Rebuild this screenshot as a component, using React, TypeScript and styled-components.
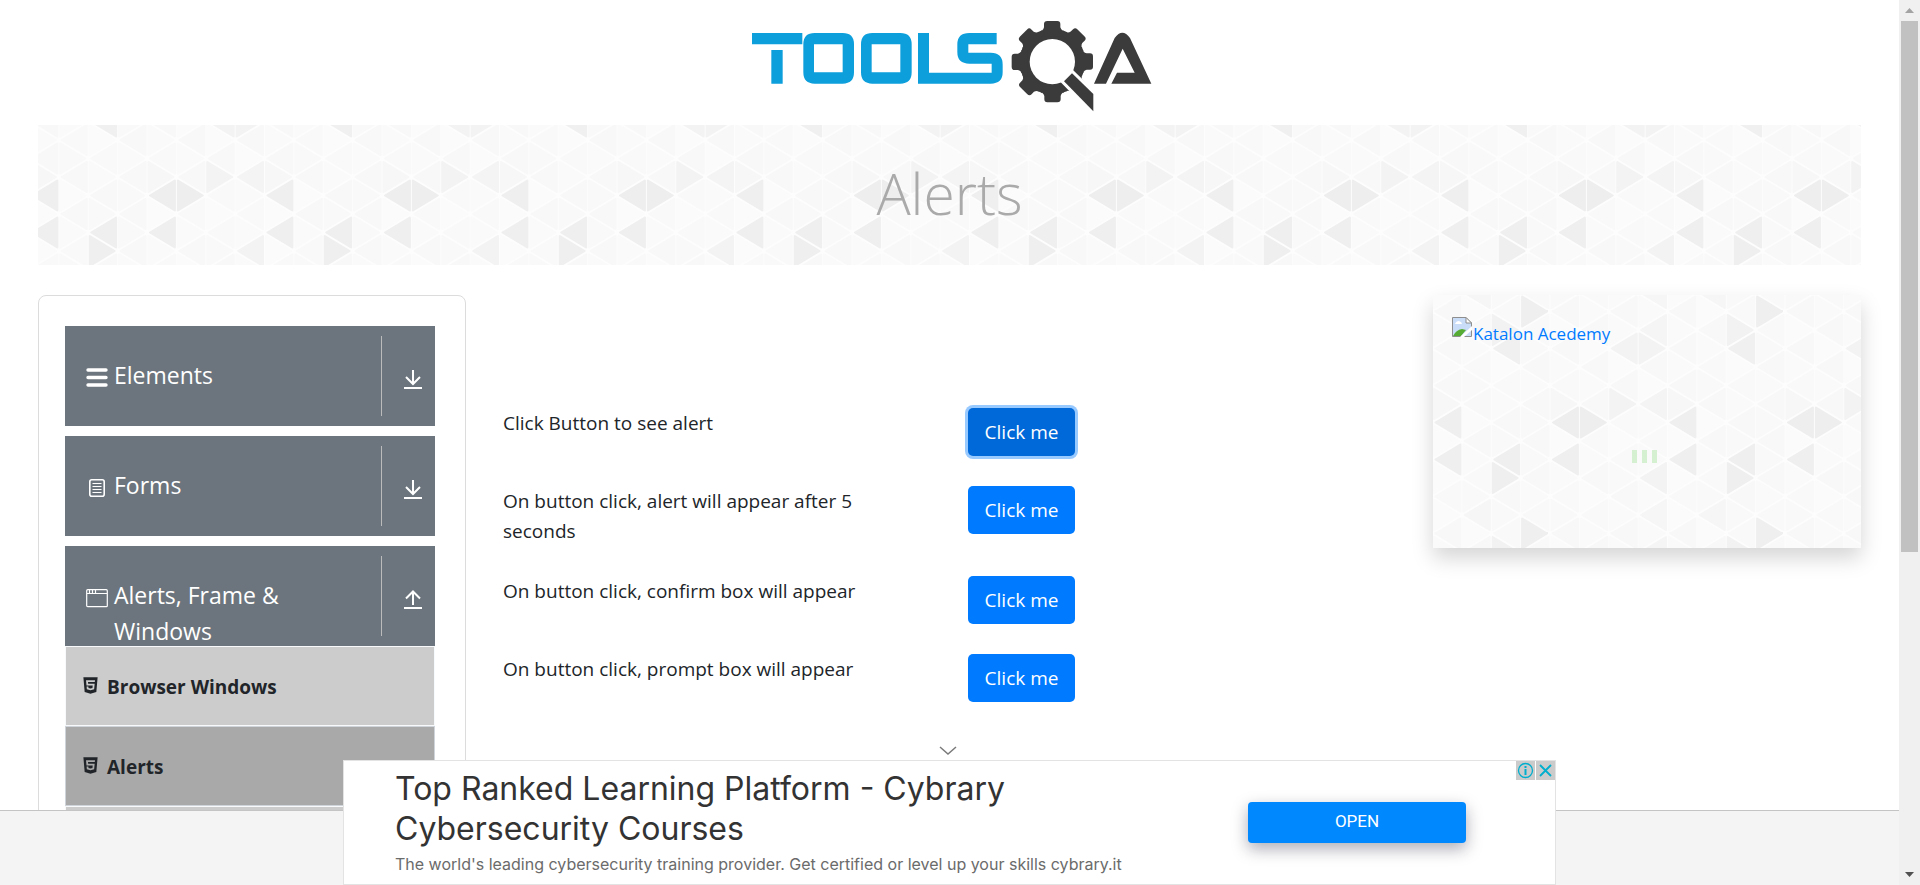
import React from "react";
import styled, { createGlobalStyle } from "styled-components";
import { FaHtml5 } from "react-icons/fa";

/* ---------- triangle texture ---------- */

const TILE_W = 235;
const TILE_H = 222;
const COL = TILE_W / 8;
const HALF = TILE_H / 12;

const accents: Record<string, string> = {
  "0,0": "#eeeeee", "1,0": "#eeeeee", "4,0": "#efefef", "0,2": "#efefef",
  "4,2": "#efefef", "6,2": "#efefef", "6,3": "#efefef", "6,8": "#f0f0f0",
  "7,6": "#efefef", "6,7": "#f2f2f2", "2,8": "#f3f3f3", "3,8": "#f3f3f3",
  "2,11": "#f3f3f3", "3,11": "#f4f4f4", "3,3": "#f3f3f3", "3,7": "#f5f5f5",
  "3,5": "#f6f6f6", "5,5": "#f6f6f6", "4,11": "#f7f7f7", "0,11": "#f7f7f7",
};
const leftTones = ["#f8f8f8", "#f9f9f9", "#f8f8f8"];
const rightTones = ["#fafafa", "#fbfbfb", "#f9f9f9"];

function buildTexture() {
  let shapes = "";
  for (let k = -1; k <= 8; k++) {
    for (let r = -7; r <= 7; r++) {
      const c = (k + 8) % 8;
      const q = (r + 12) % 12;
      const pointsLeft = (c + q) % 2 === 0;
      const tones = pointsLeft ? leftTones : rightTones;
      const tone = accents[`${c},${q}`] ?? tones[(c * 2 + q + ((c * q) % 5)) % 3];
      const x = 20 + k * COL;
      const y = 111.5 + r * HALF;
      const apex = pointsLeft ? x + 3 : x + COL - 3;
      const side = pointsLeft ? x + COL - 1.5 : x + 1.5;
      shapes += `<path d='M${apex} ${y}L${side} ${y - 15}V${y + 15}Z' fill='${tone}' stroke='${tone}' stroke-width='2' stroke-linejoin='round'/>`;
    }
  }
  const svg = `<svg xmlns='http://www.w3.org/2000/svg' width='${TILE_W}' height='${TILE_H}'><rect width='100%' height='100%' fill='#fdfdfd'/>${shapes}</svg>`;
  return `url("data:image/svg+xml,${encodeURIComponent(svg).replace(/'/g, "%27")}")`;
}
const texture = buildTexture();

/* ---------- styles ---------- */

const GlobalStyle = createGlobalStyle`
  * { box-sizing: border-box; }
  body {
    margin: 0;
    background: #fff;
    color: #212529;
    font-family: "Open Sans", "Noto Sans", sans-serif;
    font-size: 19px;
    line-height: 30px;
  }
`;

const Shell = styled.div`
  display: flex;
  height: 100vh;
  overflow: hidden;
`;

const Page = styled.div`
  flex: 1;
  min-width: 0;
  padding: 0 38px;
`;

const Header = styled.header`
  display: flex;
  justify-content: center;
  height: 125px;
  padding-top: 10px;
`;

const Banner = styled.div`
  display: flex;
  align-items: center;
  justify-content: center;
  height: 140px;
  padding-bottom: 4px;
  background: ${texture} center;
`;

const Title = styled.h1`
  margin: 0;
  color: #aaa;
  font-size: 57px;
  font-weight: 300;
  line-height: 72px;
`;

const Columns = styled.div`
  display: grid;
  grid-template-columns: repeat(12, minmax(0, 1fr));
  column-gap: 37px;
  margin-top: 30px;
  align-items: start;
`;

const Sidebar = styled.nav`
  grid-column: span 3;
  padding: 30px 30px 30px 26px;
  border: 1px solid #dcdcdc;
  border-radius: 8px;
`;

const Group = styled.section`
  margin-bottom: 10px;
`;

const GroupHeader = styled.button`
  display: flex;
  align-items: center;
  width: 100%;
  height: 100px;
  padding: 10px 12px 10px 21px;
  border: 0;
  background: #6c757d;
  color: #fff;
  font: inherit;
  font-size: 23px;
  line-height: 36px;
  text-align: left;
`;

const GroupLabel = styled.span`
  display: flex;
  flex: 1;
  gap: 6px;
  height: 80px;
  padding: 21px 60px 0 0;
  border-right: 1px solid #bbb;

  svg { flex: none; margin-top: 10px; }
`;

const GroupArrow = styled.span`
  display: flex;
  justify-content: flex-end;
  width: 41px;
  padding-top: 8px;
`;

const SubList = styled.ul`
  margin: 0;
  padding: 0;
  list-style: none;
`;

const SubItem = styled.li<{ $active?: boolean }>`
  border: 1px solid ${(p) => (p.$active ? "#ced4da" : "#f8f9fa")};
  background: ${(p) => (p.$active ? "#a9a9a9" : "#ccc")};
`;

const SubLink = styled.a`
  display: flex;
  align-items: center;
  gap: 7px;
  height: 78px;
  padding: 2px 0 0 15px;
  color: #212529;
  font-size: 19px;
  font-weight: 700;
  text-decoration: none;

  svg { margin-bottom: 4px; }
`;

const Content = styled.main`
  grid-column: span 6;
  display: flex;
  flex-direction: column;
  gap: 30px;
  padding-top: 113px;
`;

const AlertRow = styled.div`
  display: grid;
  grid-template-columns: repeat(2, minmax(0, 1fr));
  column-gap: 37px;
  align-items: start;
`;

const AlertText = styled.span`
  padding-right: 30px;
`;

const PrimaryButton = styled.button<{ $focused?: boolean }>`
  justify-self: start;
  width: 107px;
  height: 48px;
  padding: 0;
  border: 0;
  border-radius: 5px;
  background: ${(p) => (p.$focused ? "#0069d9" : "#007bff")};
  box-shadow: ${(p) => (p.$focused ? "0 0 0 3px #99caff" : "none")};
  color: #fff;
  font: inherit;
`;

const Promo = styled.aside`
  grid-column: span 3;
  display: flex;
  flex-direction: column;
  height: 253px;
  padding: 20px 19px;
  background: ${texture} center;
  box-shadow: 0 10px 20px rgba(0, 0, 0, 0.17);
`;

const PromoLink = styled.a`
  display: flex;
  gap: 1px;
  color: #007bff;
  font-size: 17px;
  line-height: 38px;
  text-decoration: none;

  svg { margin-top: 2px; }
`;

const Loader = styled.div`
  display: flex;
  justify-content: center;
  gap: 5px;
  margin-top: 97px;
  padding-right: 6px;
`;

const LoaderBar = styled.span`
  width: 5px;
  height: 13px;
  background: #d5efd1;
`;

const Scrollbar = styled.div`
  display: flex;
  flex-direction: column;
  align-items: center;
  width: 21px;
  background: #f0f0f0;
`;

const ScrollArrow = styled.span`
  display: flex;
  align-items: center;
  justify-content: center;
  height: 21px;
`;

const Track = styled.div`
  flex: 1;
  width: 17px;
`;

const Thumb = styled.div`
  height: 63%;
  background: #c1c1c1;
`;

const Dock = styled.footer`
  position: fixed;
  left: 0;
  right: 21px;
  bottom: 0;
  display: flex;
  align-items: flex-end;
  justify-content: center;
  height: 75px;
  border-top: 1px solid #c4c4c4;
  background: #f4f4f4;
`;

const AdStack = styled.div`
  display: flex;
  flex-direction: column;
  width: 100%;
  max-width: 1213px;
`;

const Collapse = styled.button`
  display: flex;
  align-self: center;
  padding: 0;
  margin: 0 4px 5px 0;
  border: 0;
  background: none;
`;

const Ad = styled.section`
  display: flex;
  height: 125px;
  padding-left: 51px;
  border: 1px solid #e3e3e3;
  background: #fff;
  font-family: Inter, sans-serif;
`;

const AdCopy = styled.div`
  width: 853px;
  padding-top: 8px;
`;

const AdTitle = styled.h2`
  max-width: 660px;
  margin: 0;
  color: #333;
  font-size: 32px;
  font-weight: 400;
  line-height: 40px;
`;

const AdSub = styled.p`
  margin: 0;
  color: #6b6b6b;
  font-size: 16px;
  line-height: 30px;
  white-space: nowrap;
`;

const OpenButton = styled.button`
  width: 218px;
  height: 41px;
  margin-top: 41px;
  padding: 0 0 4px;
  border: 0;
  border-radius: 4px;
  background: #0088ff;
  box-shadow: 0 6px 16px rgba(20, 20, 50, 0.35);
  color: #fff;
  font-family: Roboto, sans-serif;
  font-size: 17px;
`;

const AdChoices = styled.div`
  display: flex;
  gap: 1px;
  margin-left: auto;
`;

const AdChoice = styled.button`
  display: flex;
  align-items: center;
  justify-content: center;
  width: 19px;
  height: 19px;
  padding: 0;
  border: 0;
  background: #cbcbcb;
`;

/* ---------- drawings ---------- */

const Logo = () => (
  <svg width="419" height="110" viewBox="0 0 1257 330" role="img" aria-label="ToolsQA">
    <g fill="#0c9fdc">
      <path d="M36 69H187V103H36ZM94 120H128V221H94Z" />
      <path fillRule="evenodd" d="M224 69H308Q342 69 342 103V187Q342 221 308 221H224Q190 221 190 187V103Q190 69 224 69ZM222 103V187H308V103Z" />
      <path fillRule="evenodd" d="M397 69H481Q515 69 515 103V187Q515 221 481 221H397Q363 221 363 187V103Q363 69 397 69ZM395 103V187H481V103Z" />
      <path d="M534 69H567V188H755V161H688Q652 161 652 127V103Q652 69 688 69H770V103H685V128H752Q788 128 788 164V187Q788 221 752 221H534Z" />
    </g>
    <g fill="#3b3b3b">
      <circle cx="937" cy="155" r="96" />
      {[0, 45, 90, 135, 180, 225, 270, 315].map((a) => (
        <path key={a} transform={`rotate(${a} 937 155)`} d="M893 66Q910 64 912 52V42Q912 33 922 33H952Q961 33 961 42V52Q964 64 981 66V80H893Z" />
      ))}
    </g>
    <circle cx="937" cy="155" r="68" fill="#fff" />
    <path d="M972 214L996 190L1060 252V304Z" fill="#3b3b3b" stroke="#fff" strokeWidth="18" />
    <path d="M972 214L996 190L1060 252V304Z" fill="#3b3b3b" />
    <path d="M1062 221L1124 84Q1147 52 1170 84L1234 221H1114L1131 188H1184L1148 116L1098 221Z" fill="#3b3b3b" />
  </svg>
);

const MenuIcon = () => (
  <svg width="22" height="22" viewBox="0 0 22 22" stroke="#fff" strokeWidth="3.4" strokeLinecap="round">
    <path d="M2 3H20M2 10.500H20M2 18H20" />
  </svg>
);

const FormIcon = () => (
  <svg width="22" height="22" viewBox="0 0 22 22" fill="none" stroke="#fff">
    <rect x="3.800" y="2.800" width="14.400" height="16.400" rx="2" strokeWidth="1.600" />
    <path d="M6.500 6.500H15.500M6.500 9.500H15.500M6.500 12.500H15.500M6.500 15.500H15.500" />
  </svg>
);

const WindowIcon = () => (
  <svg width="22" height="22" viewBox="0 0 22 22" fill="none" stroke="#fff" strokeWidth="1.200">
    <rect x="0.700" y="2.700" width="20.600" height="17" rx="1" />
    <path d="M1 6.500H21M3.500 3V6M6.500 3V6M9.500 3V6" />
  </svg>
);

const ArrowIcon = ({ up }: { up?: boolean }) => (
  <svg width="20" height="22" viewBox="0 0 20 22" fill="none" stroke="#fff" strokeWidth="2">
    <path d={up ? "M10 16V3M3 9.500L10 2.500L17 9.500" : "M10 1V15M3 8L10 15L17 8"} />
    <path d="M1 19H19" />
  </svg>
);

const BrokenImage = () => (
  <svg width="20" height="20" viewBox="0 0 20 20">
    <path d="M0.500 0.500H14L19.500 6V19.500H0.500Z" fill="#c9dcf8" stroke="#8e8e8e" />
    <path d="M3 7Q4 4 7 4Q10 5 10 7Z" fill="#fff" />
    <path d="M1 19Q4 13 10 12L14 13L9 19Z" fill="#56ab35" />
    <path d="M8 20L20 9V13L12 20Z" fill="#fff" />
    <path d="M14 0.500V6H19.500Z" fill="#fff" stroke="#8e8e8e" />
  </svg>
);

/* ---------- page ---------- */

const groups = [
  { label: "Elements", icon: <MenuIcon /> },
  { label: "Forms", icon: <FormIcon /> },
  {
    label: "Alerts, Frame & Windows",
    icon: <WindowIcon />,
    items: ["Browser Windows", "Alerts", "Frames"],
  },
];

const alertRows = [
  "Click Button to see alert",
  "On button click, alert will appear after 5 seconds",
  "On button click, confirm box will appear",
  "On button click, prompt box will appear",
];

export default function App() {
  return (
    <>
      <GlobalStyle />
      <Shell>
        <Page>
          <Header>
            <Logo />
          </Header>
          <Banner>
            <Title>Alerts</Title>
          </Banner>
          <Columns>
            <Sidebar>
              {groups.map((g) => (
                <Group key={g.label}>
                  <GroupHeader type="button" aria-expanded={!!g.items}>
                    <GroupLabel>
                      {g.icon}
                      <span>{g.label}</span>
                    </GroupLabel>
                    <GroupArrow>
                      <ArrowIcon up={!!g.items} />
                    </GroupArrow>
                  </GroupHeader>
                  {g.items && (
                    <SubList>
                      {g.items.map((item) => (
                        <SubItem key={item} $active={item === "Alerts"}>
                          <SubLink href="#">
                            <FaHtml5 size={19} />
                            {item}
                          </SubLink>
                        </SubItem>
                      ))}
                    </SubList>
                  )}
                </Group>
              ))}
            </Sidebar>
            <Content>
              {alertRows.map((text, i) => (
                <AlertRow key={text}>
                  <AlertText id={`alert-${i}`}>{text}</AlertText>
                  <PrimaryButton type="button" $focused={i === 0} aria-describedby={`alert-${i}`}>
                    Click me
                  </PrimaryButton>
                </AlertRow>
              ))}
            </Content>
            <Promo>
              <PromoLink href="#">
                <BrokenImage />
                Katalon Acedemy
              </PromoLink>
              <Loader>
                <LoaderBar />
                <LoaderBar />
                <LoaderBar />
              </Loader>
            </Promo>
          </Columns>
        </Page>
        <Scrollbar>
          <ScrollArrow>
            <svg width="9" height="5" viewBox="0 0 9 5"><path d="M0 5L4.500 0L9 5Z" fill="#a3a3a3" /></svg>
          </ScrollArrow>
          <Track>
            <Thumb />
          </Track>
          <ScrollArrow>
            <svg width="9" height="5" viewBox="0 0 9 5"><path d="M0 0L4.500 5L9 0Z" fill="#505050" /></svg>
          </ScrollArrow>
        </Scrollbar>
      </Shell>
      <Dock>
        <AdStack>
          <Collapse type="button" aria-label="Collapse">
            <svg width="18" height="9" viewBox="0 0 18 9" fill="none" stroke="#7a7a7a" strokeWidth="1.500">
              <path d="M1 1L9 8L17 1" />
            </svg>
          </Collapse>
          <Ad>
            <AdCopy>
              <AdTitle>Top Ranked Learning Platform - Cybrary Cybersecurity Courses</AdTitle>
              <AdSub>
                The world's leading cybersecurity training provider. Get certified or level up your skills cybrary.it
              </AdSub>
            </AdCopy>
            <OpenButton type="button">OPEN</OpenButton>
            <AdChoices>
              <AdChoice type="button" aria-label="Ad information">
                <svg width="17" height="17" viewBox="0 0 17 17" fill="none" stroke="#00aecd">
                  <circle cx="8.500" cy="8.500" r="7" strokeWidth="1.300" />
                  <path d="M8.500 7V13M8.500 4V6" strokeWidth="2" />
                </svg>
              </AdChoice>
              <AdChoice type="button" aria-label="Close ad">
                <svg width="15" height="15" viewBox="0 0 15 15" stroke="#00aecd" strokeWidth="1.800">
                  <path d="M2 2L13 13M13 2L2 13" />
                </svg>
              </AdChoice>
            </AdChoices>
          </Ad>
        </AdStack>
      </Dock>
    </>
  );
}
